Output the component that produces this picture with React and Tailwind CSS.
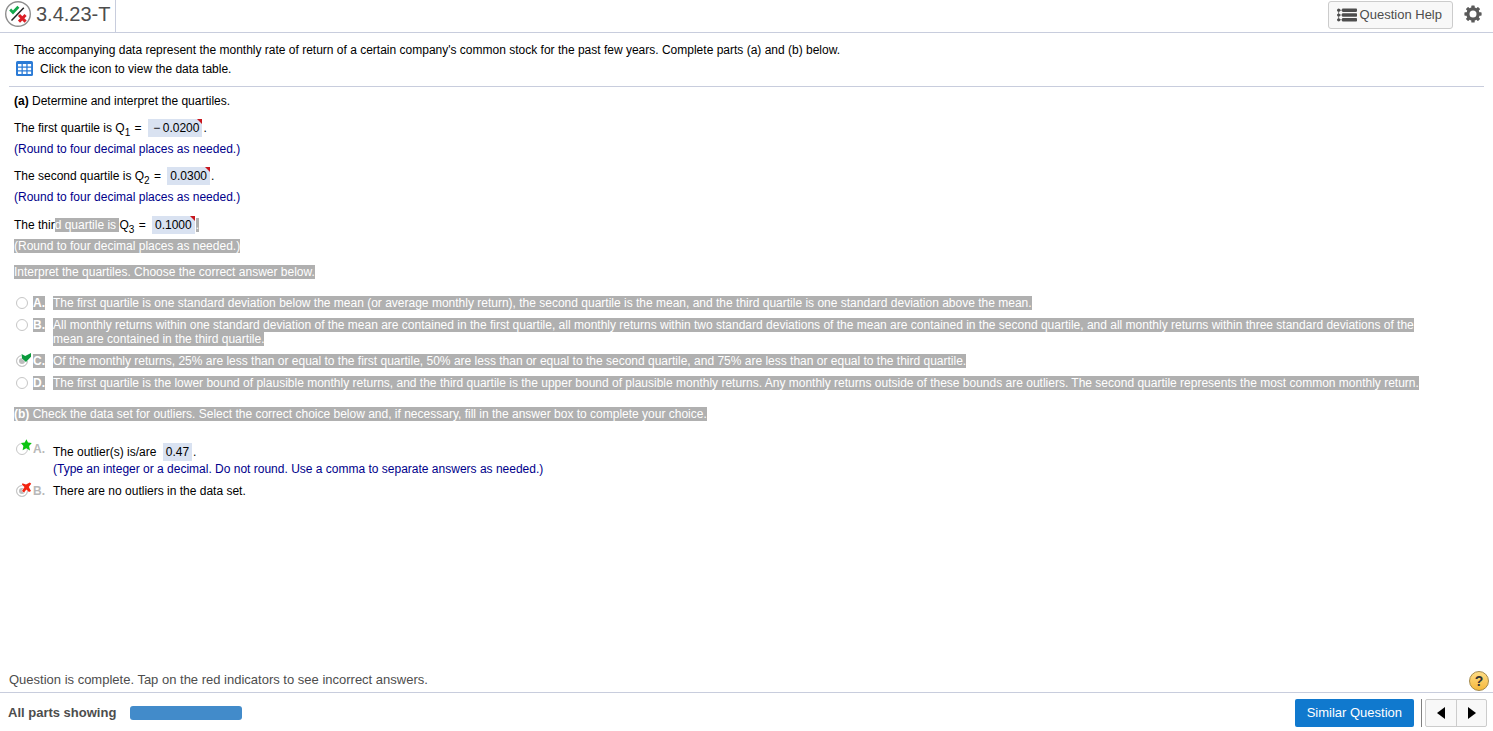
import React, { useState } from 'react';
import clsx from 'clsx';

const interpretations = [
    {
        id: 'A',
        text: 'The first quartile is one standard deviation below the mean (or average monthly return), the second quartile is the mean, and the third quartile is one standard deviation above the mean.'
    },
    {
        id: 'B',
        text: 'All monthly returns within one standard deviation of the mean are contained in the first quartile, all monthly returns within two standard deviations of the mean are contained in the second quartile, and all monthly returns within three standard deviations of the mean are contained in the third quartile.'
    },
    {
        id: 'C',
        text: 'Of the monthly returns, 25% are less than or equal to the first quartile, 50% are less than or equal to the second quartile, and 75% are less than or equal to the third quartile.',
        mark: 'check'
    },
    {
        id: 'D',
        text: 'The first quartile is the lower bound of plausible monthly returns, and the third quartile is the upper bound of plausible monthly returns. Any monthly returns outside of these bounds are outliers. The second quartile represents the most common monthly return.'
    }
];

const Marked = ({ children }) => (
    <span className="bg-[#b0b0b0] text-white">{children}</span>
);

const Answer = ({ children, flagged }) => (
    <span className="relative ml-[3px] mr-px inline-block bg-[#d9e2f1] px-[3px] py-[2px] leading-[14px]">
        {children}
        {flagged && (
            <svg className="absolute right-0 top-0 h-[5px] w-[5px]" viewBox="0 0 5 5">
                <path d="M0 0H5V5Z" fill="#c8161d" />
            </svg>
        )}
    </span>
);

const Sub = ({ children }) => (
    <sub className="relative top-1 mr-px align-baseline text-[10px] leading-none">{children}</sub>
);

const Note = ({ children }) => (
    <p className="text-[#00008b]">{children}</p>
);

const Mark = ({ type }) => (
    <svg
        className="absolute -top-[3px] left-[6px] h-[14px] w-3"
        viewBox="0 0 12 14"
        stroke="#fff"
        strokeWidth="1"
        paintOrder="stroke"
    >
        {type === 'check' && <path d="M1.6 3L5.2 5L11 2V5.8L6 11L2 7.4Z" fill="#0a9a3c" />}
        {type === 'star' && (
            <path d="M6.4 0.2L8 3.6L11.8 4L9.1 6.9L10 11.4L6.3 9.2L2.6 11.2L3.4 7L0.9 4L4.7 3.6Z" fill="#0bc410" />
        )}
        {type === 'cross' && (
            <path d="M2.4 2.2L6 3.6L9.8 1.4L11.2 2.8L8.8 6L11 10L9 11L6.4 8.4L4 11.4L2 10L4.5 6L2 3.8Z" fill="#f3230f" />
        )}
    </svg>
);

const Choice = ({ name, id, checked, onChange, mark, marked, children }) => {
    const inputId = `${name}-${id}`;
    return (
        <div className="flex pr-10">
            <span className="relative mr-1 h-[14px] w-[15px] shrink-0 pl-[2px] pt-px">
                <input
                    type="radio"
                    id={inputId}
                    name={name}
                    checked={checked}
                    onChange={onChange}
                    className={clsx(
                        'block h-3 w-3 appearance-none rounded-full border border-[#c6c6c6]',
                        checked ? 'bg-[#bdbdbd] shadow-[inset_0_0_0_2px_#fff]' : 'bg-white'
                    )}
                />
                {mark && <Mark type={mark} />}
            </span>
            <label htmlFor={inputId} className="flex">
                <span className="w-5 shrink-0 font-bold text-[#b8b8b8]">
                    {marked ? <Marked>{id}.</Marked> : `${id}.`}
                </span>
                <span>{marked ? <Marked>{children}</Marked> : children}</span>
            </label>
        </div>
    );
};

const ResultIcon = () => (
    <svg className="h-7 w-7" viewBox="0 0 28 28" fill="none">
        <circle cx="14" cy="14" r="12.3" fill="#fff" stroke="#8e8e8e" strokeWidth="1.4" />
        <path d="M7.5 20.5L19.8 7.8" stroke="#222" strokeWidth="1.5" />
        <path d="M6.2 9.6L9 12.4L14.4 6.8" stroke="#12a84b" strokeWidth="2.8" />
        <path d="M15 15L21.6 21.6M21.6 15L15 21.6" stroke="#dc1f26" strokeWidth="3" />
    </svg>
);

const ListIcon = () => (
    <svg className="h-[14px] w-5" viewBox="0 0 20 14" fill="#4d4d4d">
        <rect x="5" y="0.5" width="15" height="3.4" rx="0.8" />
        <rect x="5" y="5.3" width="15" height="3.4" rx="0.8" />
        <rect x="5" y="10.1" width="15" height="3.4" rx="0.8" />
        <path d="M1.6 2V12M0 2.2H5M0 7H5M0 11.8H5" stroke="#4d4d4d" strokeWidth="0.7" />
        <circle cx="1.7" cy="2.2" r="1.6" />
        <circle cx="1.7" cy="7" r="1.6" />
        <circle cx="1.7" cy="11.8" r="1.6" />
    </svg>
);

const GearIcon = () => (
    <svg className="h-[18px] w-[18px]" viewBox="0 0 18 18">
        <g fill="#5a5a5a">
            <rect x="7.3" y="0.4" width="3.4" height="17.2" rx="0.6" />
            <rect x="7.3" y="0.4" width="3.4" height="17.2" rx="0.6" transform="rotate(45 9 9)" />
            <rect x="7.3" y="0.4" width="3.4" height="17.2" rx="0.6" transform="rotate(90 9 9)" />
            <rect x="7.3" y="0.4" width="3.4" height="17.2" rx="0.6" transform="rotate(135 9 9)" />
            <circle cx="9" cy="9" r="6.7" />
        </g>
        <circle cx="9" cy="9" r="3.5" fill="#fff" />
    </svg>
);

const TableIcon = () => (
    <svg className="h-[15px] w-[17px]" viewBox="0 0 17 15">
        <rect width="17" height="15" rx="1.5" fill="#2b7bd6" />
        <g fill="#fff">
            <path d="M2 3h3.5v2.5H2zM6.8 3h3.5v2.5H6.8zM11.6 3h3.5v2.5h-3.5z" />
            <path d="M2 6.8h3.5v2.5H2zM6.8 6.8h3.5v2.5H6.8zM11.6 6.8h3.5v2.5h-3.5z" />
            <path d="M2 10.6h3.5v2.5H2zM6.8 10.6h3.5v2.5H6.8zM11.6 10.6h3.5v2.5h-3.5z" />
        </g>
    </svg>
);

const App = () => {
    const [interpretation, setInterpretation] = useState('C');
    const [outlier, setOutlier] = useState('B');

    return (
        <div className="flex min-h-screen flex-col bg-white font-['Liberation_Sans',Arial,sans-serif] text-xs leading-[14px] text-black">
            <header className="flex h-[33px] items-stretch justify-between border-b border-[#c8cddd]">
                <div className="flex items-center gap-1 border-r border-[#c8cddd] pb-1 pl-1 pr-[5px]">
                    <ResultIcon />
                    <h1 className="text-xl text-[#4d4d4d]">3.4.23-T</h1>
                </div>
                <div className="flex items-start gap-[11px] pr-[11px] pt-px">
                    <button
                        type="button"
                        className="flex h-7 items-center gap-[3px] rounded-[3px] border border-[#cccccc] bg-[#f8f8f8] px-2 pr-[10px] text-[13px] text-[#4d4d4d]"
                    >
                        <ListIcon />
                        Question Help
                    </button>
                    <button type="button" aria-label="Settings" className="pt-1">
                        <GearIcon />
                    </button>
                </div>
            </header>

            <main className="grow px-[9px] pt-[10px]">
                <section className="border-b border-[#c8cddd] px-[5px] pb-[10px]">
                    <p>
                        The accompanying data represent the monthly rate of return of a certain company's common stock for the past few years. Complete parts (a) and (b) below.
                    </p>
                    <button type="button" className="mt-1 flex items-center gap-[7px] pl-[2px]">
                        <TableIcon />
                        Click the icon to view the data table.
                    </button>
                </section>

                <section className="px-[5px] pt-[7px]">
                    <p>
                        <b>(a)</b> Determine and interpret the quartiles.
                    </p>

                    <div className="mt-[10px]">
                        <p className="h-6 whitespace-nowrap leading-5">
                            The first quartile is Q<Sub>1</Sub> = <Answer flagged>&thinsp;−&thinsp;0.0200</Answer>.
                        </p>
                        <Note>(Round to four decimal places as needed.)</Note>
                    </div>
                    <div className="mt-[10px]">
                        <p className="h-6 whitespace-nowrap leading-5">
                            The second quartile is Q<Sub>2</Sub> = <Answer flagged>0.0300</Answer>.
                        </p>
                        <Note>(Round to four decimal places as needed.)</Note>
                    </div>
                    <div className="mt-[11px]">
                        <p className="h-6 whitespace-nowrap leading-5">
                            The thir<Marked>d quartile is </Marked>Q<Sub>3</Sub> = <Answer flagged>0.1000</Answer>
                            <Marked>.</Marked>
                        </p>
                        <Note>
                            <Marked>(Round to four decimal places as needed.)</Marked>
                        </Note>
                    </div>

                    <p className="mt-3">
                        <Marked>Interpret the quartiles. Choose the correct answer below.</Marked>
                    </p>

                    <div className="mt-[17px] flex flex-col gap-2">
                        {interpretations.map((item) => (
                            <Choice
                                key={item.id}
                                name="interpretation"
                                id={item.id}
                                mark={item.mark}
                                checked={interpretation === item.id}
                                onChange={() => setInterpretation(item.id)}
                                marked
                            >
                                {item.text}
                            </Choice>
                        ))}
                    </div>

                    <p className="mt-[17px]">
                        <Marked>
                            <b>(b)</b> Check the data set for outliers. Select the correct choice below and, if necessary, fill in the answer box to complete your choice.
                        </Marked>
                    </p>

                    <div className="mt-[21px] flex flex-col gap-2">
                        <Choice
                            name="outlier"
                            id="A"
                            mark="star"
                            checked={outlier === 'A'}
                            onChange={() => setOutlier('A')}
                        >
                            <span className="block leading-5">
                                The outlier(s) is/are <Answer>0.47</Answer>.
                            </span>
                            <span className="block text-[#00008b]">
                                (Type an integer or a decimal. Do not round. Use a comma to separate answers as needed.)
                            </span>
                        </Choice>
                        <Choice
                            name="outlier"
                            id="B"
                            mark="cross"
                            checked={outlier === 'B'}
                            onChange={() => setOutlier('B')}
                        >
                            There are no outliers in the data set.
                        </Choice>
                    </div>
                </section>
            </main>

            <div className="flex items-start justify-between pl-[9px] pr-1 text-[13px] text-[#4d4d4d]">
                <p className="pt-[2px]">Question is complete. Tap on the red indicators to see incorrect answers.</p>
                <button
                    type="button"
                    aria-label="Help"
                    className="mb-px h-5 w-5 rounded-full border border-[#a58a4a] bg-linear-to-b from-[#ffdc82] to-[#f5b93a] text-[14px] font-bold leading-none text-[#333333]"
                >
                    ?
                </button>
            </div>

            <footer className="flex h-[39px] items-center justify-between border-t border-[#c8cddd] pl-2 pr-[6px] pt-[2px] text-[#4d4d4d]">
                <div className="flex items-center gap-[14px]">
                    <span className="text-[13px] font-bold">All parts showing</span>
                    <div className="h-[14px] w-28 rounded-[3px] bg-[#428bca]" />
                </div>
                <div className="flex items-center">
                    <button type="button" className="h-7 rounded-[2px] bg-[#1079ce] px-3 text-[13px] text-white">
                        Similar Question
                    </button>
                    <div className="ml-[7px] mr-[3px] h-7 w-px bg-[#808080]" />
                    <div className="flex h-7 rounded-[2px] border border-[#cccccc] bg-[#f8f8f8]">
                        <button type="button" aria-label="Previous" className="flex w-[31px] items-center justify-center border-r border-[#cccccc]">
                            <svg className="h-3 w-2" viewBox="0 0 8 12">
                                <path d="M8 0V12L0 6Z" fill="#000" />
                            </svg>
                        </button>
                        <button type="button" aria-label="Next" className="flex w-[29px] items-center justify-center">
                            <svg className="h-3 w-2" viewBox="0 0 8 12">
                                <path d="M0 0V12L8 6Z" fill="#000" />
                            </svg>
                        </button>
                    </div>
                </div>
            </footer>
        </div>
    );
};

export default App;
